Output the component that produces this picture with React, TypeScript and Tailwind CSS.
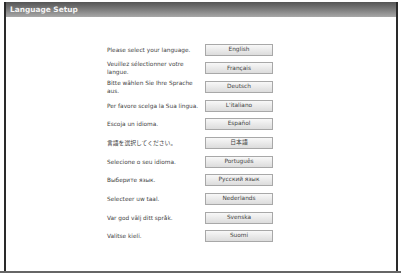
import React from "react";

const rows: { label: string[]; btn: string }[] = [
  { label: ["Please select your language."], btn: "English" },
  { label: ["Veuillez sélectionner votre", "langue."], btn: "Français" },
  { label: ["Bitte wählen Sie Ihre Sprache", "aus."], btn: "Deutsch" },
  { label: ["Per favore scelga la Sua lingua."], btn: "L'italiano" },
  { label: ["Escoja un idioma."], btn: "Español" },
  { label: ["言語を選択してください。"], btn: "日本語" },
  { label: ["Selecione o seu idioma."], btn: "Português" },
  { label: ["Выберите язык."], btn: "Русский язык" },
  { label: ["Selecteer uw taal."], btn: "Nederlands" },
  { label: ["Var god välj ditt språk."], btn: "Svenska" },
  { label: ["Valitse kieli."], btn: "Suomi" },
];

export default function App() {
  return (
    <div
      className="w-[401px] h-[273px] bg-white flex flex-col overflow-hidden"
      style={{ fontFamily: '"DejaVu Sans", "Noto Sans CJK JP", sans-serif' }}
    >
      <div className="flex-1 flex flex-col pt-[2px] pl-[4px] pr-[3px]">
        <div className="flex-1 flex flex-col border-l-2 border-r-2 border-[#2a2a2a]">
          <div className="h-[15px] bg-gradient-to-b from-[#555555] to-[#a8a8a8] flex items-center pl-[4px]">
            <span className="text-[#f4f4f4] font-bold text-[7.4px] leading-none">Language Setup</span>
          </div>
          <div className="flex flex-col pt-[23.5px] pl-[101px]">
            {rows.map((r) => (
              <div key={r.btn} className="h-[18.65px] flex items-center">
                <div className="w-[98px] text-[5.8px] leading-[8px] text-[#444]">
                  {r.label.map((l) => (
                    <div key={l}>{l}</div>
                  ))}
                </div>
                <div className="w-[68px] h-[12px] border border-[#a8a8a8] bg-gradient-to-b from-[#f8f8f8] to-[#dcdcdc] flex items-center justify-center text-[5.8px] leading-none text-[#444]">
                  {r.btn}
                </div>
              </div>
            ))}
          </div>
        </div>
      </div>
      <div className="h-[2px] bg-[#666]" />
    </div>
  );
}
